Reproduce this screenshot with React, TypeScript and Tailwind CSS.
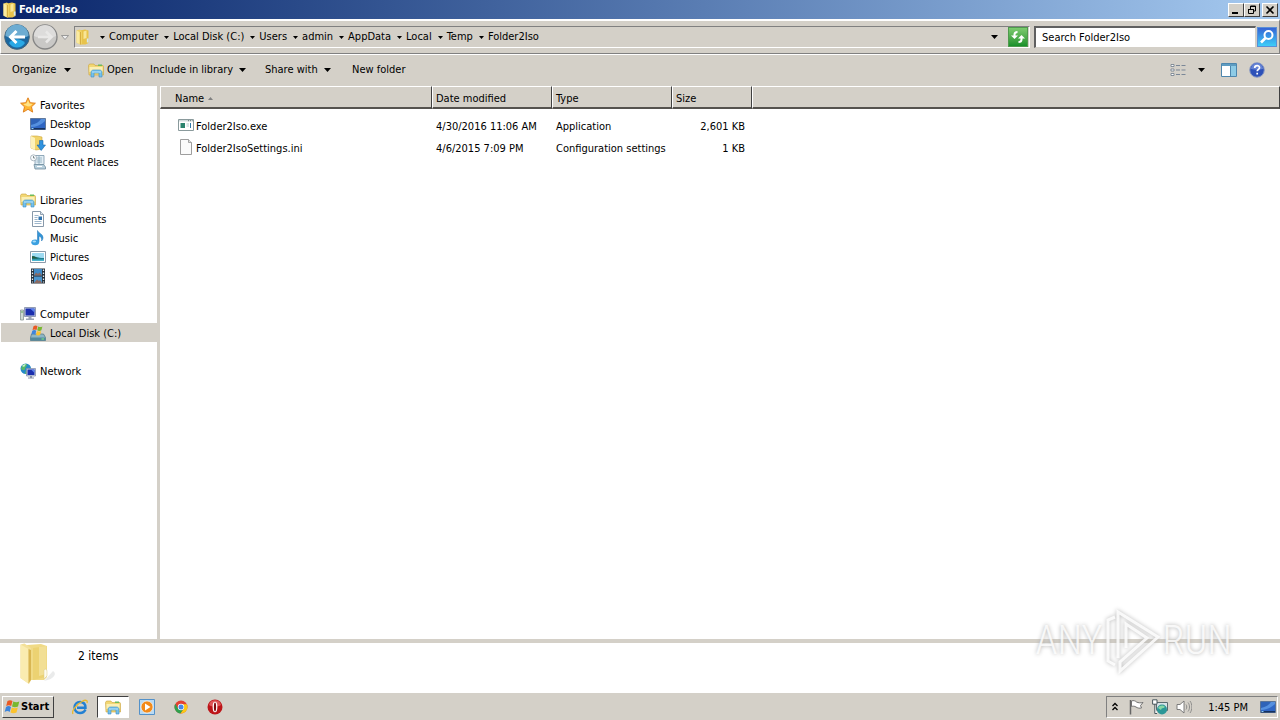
import type { ReactNode } from 'react';

type IconProps = { className?: string };

function Svg({ children, className = 'size-4', box = '0 0 16 16' }: { children: ReactNode; className?: string; box?: string }) {
  return (
    <svg viewBox={box} className={`shrink-0 ${className}`} fill="none" aria-hidden="true">
      {children}
    </svg>
  );
}

const Arrow = ({ className = 'h-1 w-[7px]' }: IconProps) => (
  <Svg box="0 0 7 4" className={className}>
    <path d="M0 0h7L3.5 4z" fill="#000" />
  </Svg>
);

const Folder = ({ className }: IconProps) => (
  <Svg className={className}>
    <path d="M5 1.500l5-1 3.500 1v12.500l-3 1.500H6z" fill="#e8c34b" />
    <path d="M8.500 2.500l3-1V9l-3 1z" fill="#f8e598" />
    <path d="M1.500 1.500L5 .5l2 2v12L5.500 15.800l-4-2z" fill="#f0d264" />
    <path d="M1.500 1.500l3 1.500v12l-3-1.500z" fill="#faeaa0" />
    <path d="M5.500 3v12.500" stroke="#cfa338" strokeWidth=".8" />
    <path d="M11.800 9.500h1.700v4h-1.700z" fill="#d6e8ef" />
  </Svg>
);

const BigFolder = () => (
  <Svg box="0 0 40 42" className="h-[42px] w-10">
    <path d="M26 37l8-9c4 2 2 8-9 10z" fill="#dcdddd" opacity=".6" />
    <path d="M8 2l14-1 6 2v31l-3 3H11z" fill="#f0da86" />
    <path d="M14 5l13-2v31l-13 3z" fill="#ecd272" />
    <path d="M20 4l7-1v28l-7 2z" fill="#f2df95" />
    <path d="M1.500 1.500l4-1L12 5v32l-2 4-8.500-6z" fill="#f3e09a" />
    <path d="M1.500 1.500l8 4.500v34.500l-8-5.500z" fill="#faecb0" />
    <path d="M9.500 6l2.500 1v30l-2.500 3.500z" fill="#d9b652" />
    <path d="M25 27c1-1.500 3-1 3 1v5l-3 3z" fill="#fdfbef" stroke="#d8c88a" strokeWidth=".5" />
  </Svg>
);

const Explorer = ({ className }: IconProps) => (
  <Svg className={className}>
    <path d="M.5 3.500L1.500 2H6l1 1.500h8l.5 1V13H1z" fill="#f2d774" stroke="#c9a13a" strokeWidth=".6" />
    <path d="M10 2.500h4V4h-4z" fill="#6dbb5a" />
    <path d="M1.500 5h13v5h-13z" fill="#fbefb4" />
    <path d="M3 15V10.500C3 9 4 8 5.500 8h6C13 8 14 9 14 10.500V15h-3v-4H6v4z" fill="#76c0ea" stroke="#3a8fc6" strokeWidth=".6" />
    <path d="M4 10h9" stroke="#c8ebfb" strokeWidth=".8" />
  </Svg>
);

const Star = () => (
  <Svg>
    <path d="M8 .8l2.200 4.900 5.200.5-3.900 3.600 1.200 5.300L8 12.300l-4.700 2.800 1.200-5.300L.6 6.200l5.200-.5z" fill="#ffb632" stroke="#de7a17" strokeWidth=".9" />
    <path d="M8 3l1.400 3.500 3.200.4-2.600 2.300L8 9.500 4.500 8 3.500 6.900l3-.4z" fill="#ffe388" />
  </Svg>
);

const Desktop = () => (
  <Svg>
    <path d="M.5 2.500h15v11H.5z" fill="#2f66c4" stroke="#52698c" strokeWidth=".8" />
    <path d="M1 11c5 0 10-2 14-6V3H1z" fill="#5590df" />
    <path d="M1 9c5-1 8-3 10-6H1z" fill="#2f63b8" />
    <path d="M1 12h14v1.500H1z" fill="#15315f" />
    <path d="M1.500 12h2v1h-2z" fill="#8ed0ff" />
  </Svg>
);

const Downloads = () => (
  <Svg>
    <path d="M1 1h6l5 1v12l-6 1-5-2z" fill="#f1d368" stroke="#cda63c" strokeWidth=".6" />
    <path d="M1 1l4 2v12l-4-2z" fill="#fdf2ba" />
    <path d="M9.500 5.500h3.500V10h2.500l-4.300 5.500L7 10h2.500z" fill="#2f92df" stroke="#1668ad" strokeWidth=".6" />
  </Svg>
);

const Recent = () => (
  <Svg>
    <path d="M5 1.500h9v9H5z" fill="#e3eef5" stroke="#7896a9" strokeWidth=".8" />
    <path d="M6.500 4H12M6.500 6H12M6.500 8H12M9 2v8" stroke="#8aa9bb" strokeWidth=".8" />
    <path d="M4 10.500h9.500l2 2.500v2H5z" fill="#b9d0dd" stroke="#6f8b9c" strokeWidth=".8" />
    <path d="M7 12.500h5" stroke="#fff" />
    <circle cx="3.500" cy="3.800" r="3" fill="#f8fbfd" stroke="#9aa7b1" strokeWidth=".8" />
    <path d="M3.500 2v2H5" stroke="#566" strokeWidth=".7" />
  </Svg>
);

const Doc = () => (
  <Svg>
    <path d="M2.500.5h8l3 3v12h-11z" fill="#fff" stroke="#7b8da0" strokeWidth=".9" />
    <path d="M10.500.5v3h3" fill="#dbe5ee" stroke="#7b8da0" strokeWidth=".8" />
    <path d="M4.500 4.500h4M4.500 6.500h3M4.500 8.500h3M4.500 10.500h7M4.500 12.500h7" stroke="#84a3bf" strokeWidth=".8" />
    <path d="M8.500 5.500h3.500v3.500H8.500z" fill="#2f73ae" />
  </Svg>
);

const Music = () => (
  <Svg>
    <path d="M7.500.5c1 3 5.500 3.500 5.500 7 0 1.500-.5 2.500-1.500 3.500.5-2.500-.5-4.500-2.500-5v6h-1.500z" fill="#3496d8" stroke="#1e72b4" strokeWidth=".5" />
    <ellipse cx="5.200" cy="12.300" rx="3.900" ry="2.900" fill="#3ba0e0" />
    <ellipse cx="4.300" cy="11.500" rx="1.800" ry="1" fill="#a7ddf8" />
  </Svg>
);

const Pictures = () => (
  <Svg>
    <path d="M.5 2.500h15v11H.5z" fill="#fff" stroke="#7f90a0" strokeWidth=".9" />
    <path d="M2 4h12v8H2z" fill="#9edaf1" />
    <path d="M2 7c3 0 5 2 12 2v3H2z" fill="#1f7f8f" />
    <path d="M2 7.500c2-1 4 1 6 2H2z" fill="#265c3e" />
    <path d="M2 10.500h12V12H2z" fill="#4bb6ce" />
  </Svg>
);

const Videos = () => (
  <Svg>
    <path d="M1 .5h14v15H1z" fill="#252f38" />
    <path d="M4 1h8v6.500H4z" fill="#3f8ac7" />
    <path d="M4 8.500h8V15H4z" fill="#4a96cf" />
    <path d="M4 7.500l2-3 2 1.500 1.500-1.500 2.500 3zM4 15l3-3.500L9 13l1-1 2 3z" fill="#8b6a62" />
    <path d="M2.500 1.500v13M13.500 1.500v13" stroke="#e6eef4" strokeWidth="1.300" strokeDasharray="1.500 1.500" />
  </Svg>
);

const ComputerIcon = () => (
  <Svg>
    <path d="M.5 4h3v10h-3z" fill="#cfd9d4" stroke="#7d8b88" strokeWidth=".7" />
    <path d="M1 6h2" stroke="#58a65b" />
    <path d="M4.500 1.500h11v9h-11z" fill="#cfd6e6" stroke="#7c88a3" strokeWidth=".8" />
    <path d="M5.500 2.500h9v7h-9z" fill="#1b2fae" />
    <path d="M10 2.500h4.500v4z" fill="#5c83ea" />
    <path d="M8.500 11h3v1.500H14V14H6v-1.500h2.500z" fill="#9ba4b5" />
  </Svg>
);

const Flag = ({ className }: IconProps) => (
  <Svg className={className}>
    <path d="M3.500 2c2-1.300 3.500-1 5 0L7.200 7c-1.500-1-3-1.200-5 0z" fill="#ea5a24" />
    <path d="M9.300 2.500c2 1 4 1 6 0L14 7.500c-2 1-4.200 1-6 0z" fill="#78b82f" />
    <path d="M2 7.900c2-1.300 3.500-1 5 0l-1.300 5c-1.500-1-3-1.200-5 0z" fill="#3d85dc" />
    <path d="M7.800 8.400c1.800 1 4 1 6 0l-1.300 5c-2 1-4.200 1-6 0z" fill="#fbc22d" />
  </Svg>
);

const Disk = () => (
  <Svg>
    <path d="M1.500 9h12l2 3.500v3H.5v-3z" fill="#8eb6c5" stroke="#53717e" strokeWidth=".7" />
    <path d="M.5 12.500h15v3H.5z" fill="#53899c" />
    <path d="M11.500 14h2.500" stroke="#7df07d" />
    <path d="M3.500 1.200c1.500-1 2.800-.8 4 0l-1 3.800c-1.300-.8-2.500-.8-4 0z" fill="#ea5a24" />
    <path d="M8.200 1.500c1.300.8 2.700.8 4.200 0l-1 3.800c-1.500.8-2.900.8-4.200 0z" fill="#78b82f" />
    <path d="M2.300 5.700c1.500-1 2.800-.8 4 0l-1 3.800c-1.300-.8-2.500-.8-4 0z" fill="#3d85dc" />
    <path d="M7 6c1.300.8 2.700.8 4.200 0l-1 3.800C8.700 10.600 7.300 10.600 6 9.800z" fill="#fbc22d" />
  </Svg>
);

const NetworkIcon = () => (
  <Svg>
    <circle cx="5.800" cy="5.800" r="5.300" fill="#2589c8" />
    <path d="M2 3c2-3 5-2 5-1S5 4 5 6 2 7 1 6zM6 7l3 1-1 3H5z" fill="#56b968" />
    <path d="M2 3c1-1.500 3-2 4-1.800L4 4z" fill="#c3efcf" />
    <path d="M6.500 5.500h9v7.500h-9z" fill="#cdd6e8" stroke="#7c88a3" strokeWidth=".7" />
    <path d="M7.500 6.500h7v5.500h-7z" fill="#1b2fae" />
    <path d="M11 6.500h3.500V10z" fill="#5c83ea" />
    <path d="M10 13h2v1.500h2v1H8v-1h2z" fill="#8993a8" />
  </Svg>
);

const ExeIcon = () => (
  <Svg>
    <path d="M.5 2.500h15v11H.5z" fill="#fff" stroke="#8a9a9c" />
    <path d="M1 3h14v1.500H1z" fill="#d0dbdc" />
    <path d="M10 3.700h1M12 3.700h1M14 3.700h.6" stroke="#64787a" />
    <path d="M2.500 6h4.500v5H2.500z" fill="#29836d" />
    <path d="M8.500 7h2.500M8.500 9h2.500" stroke="#9bb" strokeWidth=".8" />
    <path d="M12.500 6v5" stroke="#2f78a8" />
  </Svg>
);

const BlankFile = () => (
  <Svg>
    <path d="M2.500.5h8l3 3v12h-11z" fill="#fbfbfb" stroke="#939393" strokeWidth=".9" />
    <path d="M10.500.5v3h3" fill="#e3e3e3" stroke="#939393" strokeWidth=".8" />
  </Svg>
);

const crumbs = ['Computer', 'Local Disk (C:)', 'Users', 'admin', 'AppData', 'Local', 'Temp', 'Folder2Iso'];

const groups = [
  { label: 'Favorites', icon: <Star />, items: [
    { label: 'Desktop', icon: <Desktop /> },
    { label: 'Downloads', icon: <Downloads /> },
    { label: 'Recent Places', icon: <Recent /> },
  ] },
  { label: 'Libraries', icon: <Explorer />, items: [
    { label: 'Documents', icon: <Doc /> },
    { label: 'Music', icon: <Music /> },
    { label: 'Pictures', icon: <Pictures /> },
    { label: 'Videos', icon: <Videos /> },
  ] },
  { label: 'Computer', icon: <ComputerIcon />, items: [{ label: 'Local Disk (C:)', icon: <Disk />, selected: true }] },
  { label: 'Network', icon: <NetworkIcon />, items: [] },
];

const files = [
  { name: 'Folder2Iso.exe', icon: <ExeIcon />, date: '4/30/2016 11:06 AM', type: 'Application', size: '2,601 KB' },
  { name: 'Folder2IsoSettings.ini', icon: <BlankFile />, date: '4/6/2015 7:09 PM', type: 'Configuration settings', size: '1 KB' },
];

const raised = 'border border-t-white border-l-white border-r-[#404040] border-b-[#404040] bg-[#d4d0c8]';
const headCell = 'h-[23px] border-t border-l border-r border-b-2 border-t-white border-l-white border-r-[#404040] border-b-[#55524e] px-[3px] pt-1 text-left font-normal';

function TitleBar() {
  return (
    <header className="flex h-[19px] items-center bg-linear-to-r from-[#0a246a] to-[#a6caf0] px-[2px]">
      <Folder />
      <h1 className="ml-px flex-1 text-[11px] font-bold text-white">Folder2Iso</h1>
      <button aria-label="Minimize" className={`flex h-[14px] w-4 items-center justify-center ${raised}`}>
        <Svg box="0 0 10 10" className="size-[10px]"><path d="M1 7h6v2H1z" fill="#000" /></Svg>
      </button>
      <button aria-label="Restore" className={`flex h-[14px] w-4 items-center justify-center ${raised}`}>
        <Svg box="0 0 10 10" className="size-[10px]">
          <path d="M3.500 4V1h5v5H7M3 1.500h6M1.500 4.500h5v4h-5zM1 4.500h6" stroke="#000" />
        </Svg>
      </button>
      <button aria-label="Close" className={`ml-[2px] flex h-[14px] w-4 items-center justify-center ${raised}`}>
        <Svg box="0 0 10 10" className="size-[10px]"><path d="M1.500 1.500l7 7M8.500 1.500l-7 7" stroke="#000" strokeWidth="1.600" /></Svg>
      </button>
    </header>
  );
}

function AddressBar() {
  return (
    <div className="flex h-[35px] items-center border border-t-2 border-[#808080] border-t-white border-l-white pr-[2px] pl-[3px]">
      <button aria-label="Back">
        <Svg box="0 0 26 26" className="size-[26px]">
          <circle cx="13" cy="13" r="12.300" fill="#1c679f" stroke="#45667c" />
          <path d="M1.500 12a11.500 11.500 0 0 1 23 0c-6 3-17 3-23 0z" fill="#6dacd2" />
          <path d="M5 19c4-5 12-5 16 0-4 6-12 6-16 0z" fill="#29a9e6" />
          <path d="M12.500 7L6.500 13l6 6M7.500 13H21" stroke="#fff" strokeWidth="3" />
        </Svg>
      </button>
      <button aria-label="Forward" className="ml-[2px]">
        <Svg box="0 0 26 26" className="size-[26px]">
          <circle cx="13" cy="13" r="12" fill="#c9c8c6" stroke="#858585" strokeWidth="1.300" />
          <path d="M2 12a11 11 0 0 1 22 0c-6 3-16 3-22 0z" fill="#dddcdb" />
          <path d="M14 7.500l5.500 5.500-5.500 5.500M18.500 13H6" stroke="#e9e8e7" strokeWidth="2.500" />
        </Svg>
      </button>
      <button aria-label="Recent pages" className="ml-[3px]">
        <Svg box="0 0 8 5" className="h-[5px] w-2"><path d="M.5.5h7L4 4.500z" fill="#eee" stroke="#888" strokeWidth=".8" /></Svg>
      </button>
      <nav aria-label="Address" className="ml-[5px] flex h-[22px] flex-1 items-center border border-t-[#808080] border-r-white border-b-white border-l-[#808080]">
        <Folder />
        {crumbs.map((name) => (
          <span key={name} className="flex items-center pl-[6px] first-of-type:pl-[9px]">
            <Arrow className="mr-1 h-[3px] w-[5px]" />
            <a href="#" className="whitespace-nowrap">{name}</a>
          </span>
        ))}
        <button aria-label="Previous locations" className="mr-[10px] ml-auto flex h-full items-center"><Arrow /></button>
        <button aria-label="Refresh" className="mr-px flex size-5 items-center justify-center border border-[#4f9a4d] bg-linear-to-b from-[#7ccb6f] to-[#15912a]">
          <Svg>
            <path d="M4.500 7V5.500C4.500 4 5.500 3 7.500 3" stroke="#fff" strokeWidth="2" />
            <path d="M1 6.500h7L4.500 10z" fill="#fff" />
            <path d="M11.500 9v1.500c0 1.500-1 2.500-3 2.500" stroke="#fff" strokeWidth="2" />
            <path d="M8 9.500h7L11.500 6z" fill="#fff" />
          </Svg>
        </button>
      </nav>
      <input
        type="text"
        aria-label="Search"
        placeholder="Search Folder2Iso"
        className="ml-1 h-[22px] w-[222px] border border-t-2 border-l-2 border-[#d4d0c8] border-t-[#606060] border-l-[#606060] bg-white px-[6px] placeholder:text-black placeholder:opacity-100"
      />
      <button aria-label="Start search" className="ml-px flex size-5 items-center justify-center border border-[#5a8fd6] bg-linear-to-b from-[#3763d4] to-[#3ecdf8]">
        <Svg>
          <circle cx="9.500" cy="6" r="4" stroke="#fff" strokeWidth="2" />
          <path d="M6.500 9L2 13.500" stroke="#fff" strokeWidth="2.600" />
        </Svg>
      </button>
    </div>
  );
}

function Toolbar() {
  return (
    <div className="flex h-8 items-center border-t border-white pr-[15px] pb-[2px] pl-3">
      <button className="flex w-[76px] items-center gap-2">Organize <Arrow /></button>
      <button className="flex w-[62px] items-center gap-[3px]"><Explorer /> Open</button>
      <button className="flex w-[115px] items-center gap-[6px] whitespace-nowrap">Include in library <Arrow /></button>
      <button className="flex w-[87px] items-center gap-[6px] whitespace-nowrap">Share with <Arrow /></button>
      <button className="whitespace-nowrap">New folder</button>
      <button aria-label="Change view" className="ml-auto">
        <Svg>
          <path d="M1 2.500h3v2H1zM1 7h3v2H1zM1 11.500h3v2H1z" fill="#fff" stroke="#6c7888" strokeWidth=".8" />
          <path d="M6 3.500h4M6 8h4M6 12.500h4M11.500 3.500h4M11.500 8h4M11.500 12.500h4" stroke="#7a8797" />
        </Svg>
      </button>
      <button aria-label="More views" className="ml-3"><Arrow /></button>
      <button aria-label="Preview pane" className="ml-4">
        <Svg>
          <path d="M.5 1.500h15v13H.5z" fill="#fff" stroke="#4d86ad" />
          <path d="M1 2h14v2H1z" fill="#5e9cc1" />
          <path d="M10 4h5v10h-5z" fill="#8dcbe6" />
          <path d="M9.500 4v10" stroke="#4d86ad" />
        </Svg>
      </button>
      <button aria-label="Help" className="ml-3">
        <Svg>
          <circle cx="8" cy="8" r="7.300" fill="#2c50b8" stroke="#8d9cc4" />
          <path d="M2 7a6 6 0 0 1 12 0c-4 1-8 1-12 0z" fill="#6482d4" />
          <path d="M5.700 6c0-3 4.800-3 4.800-.3 0 1.600-2.300 1.700-2.300 3.500M8.200 10.800v1.800" stroke="#fff" strokeWidth="1.700" />
        </Svg>
      </button>
    </div>
  );
}

function Sidebar() {
  return (
    <nav aria-label="Folders" className="flex w-40 shrink-0 flex-col gap-[19px] border-r-[3px] border-[#d4d0c8] bg-white pt-[9px] pl-px">
      {groups.map((group) => (
        <section key={group.label}>
          <a href="#" className="flex h-[19px] items-center gap-1 pl-[19px]">
            {group.icon}
            <span className="pt-[2px]">{group.label}</span>
          </a>
          {group.items.map((item) => (
            <a key={item.label} href="#" className={`flex h-[19px] items-center gap-1 pl-[29px] ${'selected' in item ? 'bg-[#d4d0c8]' : ''}`}>
              {item.icon}
              <span className="pt-[2px]">{item.label}</span>
            </a>
          ))}
        </section>
      ))}
    </nav>
  );
}

function FileList() {
  return (
    <main className="min-w-0 flex-1 bg-white">
      <table className="w-full table-fixed border-separate border-spacing-0">
        <colgroup>
          <col className="w-[272px]" />
          <col className="w-[120px]" />
          <col className="w-[120px]" />
          <col className="w-20" />
          <col />
        </colgroup>
        <thead className="bg-[#d4d0c8]">
          <tr>
            <th className={headCell}>
              <span className="flex items-center gap-1 pl-[11px]">
                Name
                <Svg box="0 0 5 3" className="mb-[2px] h-[3px] w-[5px]"><path d="M0 3h5L2.500 0z" fill="#808080" /></Svg>
              </span>
            </th>
            <th className={headCell}>Date modified</th>
            <th className={headCell}>Type</th>
            <th className={headCell}>Size</th>
            <td className={headCell} />
          </tr>
        </thead>
        <tbody className="before:block before:h-[5px] before:content-['']">
          {files.map((file) => (
            <tr key={file.name} className="h-[22px] whitespace-nowrap">
              <td>
                <span className="flex items-center gap-[2px] pl-[18px]">
                  {file.icon}
                  <span className="pt-1">{file.name}</span>
                </span>
              </td>
              <td className="pt-1 pl-1">{file.date}</td>
              <td className="pt-1 pl-1">{file.type}</td>
              <td className="pt-1 pr-[7px] text-right">{file.size}</td>
              <td />
            </tr>
          ))}
        </tbody>
      </table>
    </main>
  );
}

function Taskbar() {
  return (
    <footer className="flex h-7 items-center border-t border-white bg-[#d4d0c8] px-[2px]">
      <button className={`flex h-[22px] w-[52px] items-center gap-px pl-px text-[11px] font-bold ${raised}`}>
        <Flag /> Start
      </button>
      <button aria-label="Internet Explorer" className="ml-[18px]">
        <Svg>
          <path d="M13.500 10.500c-1 2.300-3 3.500-5.500 3.500-3.300 0-5.500-2.300-5.500-5.500S4.700 3 8 3s5.500 2 5.500 5.800H5" stroke="#2280d3" strokeWidth="2.400" />
          <path d="M1 15C-1 12 5 5 10 2.500c3-1.700 6-2 5 1.500" stroke="#e9b92f" strokeWidth="1.300" />
        </Svg>
      </button>
      <button aria-label="Folder2Iso" className="ml-[9px] flex h-[22px] w-8 items-center justify-center border border-t-[#404040] border-r-white border-b-white border-l-[#404040] bg-white">
        <Explorer />
      </button>
      <button aria-label="Media Player" className="ml-[10px]">
        <Svg>
          <path d="M.5.5h15v15H.5z" fill="#b9daf3" stroke="#5391c9" />
          <circle cx="8" cy="8" r="6" fill="#f28a1a" stroke="#fff" strokeWidth=".6" />
          <path d="M6 4.500v7L11.500 8z" fill="#fff" />
        </Svg>
      </button>
      <button aria-label="Chrome" className="ml-[18px]">
        <Svg>
          <circle cx="8" cy="8" r="6.500" fill="#e34133" />
          <path d="M2.300 4.800A6.500 6.500 0 0 0 7.500 14.500L11 9.500 5 9.500z" fill="#2fa04e" />
          <path d="M7.500 14.500A6.500 6.500 0 0 0 13.800 5.200H8l3 4.300z" fill="#fbc916" />
          <circle cx="8" cy="8" r="3.200" fill="#fff" />
          <circle cx="8" cy="8" r="2.500" fill="#4587e8" />
        </Svg>
      </button>
      <button aria-label="Opera" className="ml-[18px]">
        <Svg>
          <circle cx="8" cy="8" r="7.500" fill="#bd1519" />
          <path d="M2 6a6.200 6.200 0 0 1 12 0c-3 2-9 2-12 0z" fill="#df5759" />
          <ellipse cx="8" cy="8" rx="2.400" ry="5.300" fill="#fff" />
          <ellipse cx="8" cy="8" rx="1.100" ry="4.400" fill="#7d0b0e" />
        </Svg>
      </button>
      <div className="ml-auto flex h-[22px] items-center border border-t-[#808080] border-r-white border-b-white border-l-[#808080] pr-px pl-[5px]">
        <button aria-label="Show hidden icons">
          <Svg box="0 0 6 9" className="h-[9px] w-[6px]"><path d="M.5 4L3 1.500 5.500 4M.5 8L3 5.500 5.500 8" stroke="#000" strokeWidth="1.300" /></Svg>
        </button>
        <button aria-label="Action Center" className="ml-[10px]">
          <Svg>
            <path d="M2.500 1v14.500" stroke="#666" strokeWidth="1.500" />
            <path d="M3.500 2c2-1 4 0 5 1 2 1 4 1 6.500.5l-2.500 3 1 2.500c-2 .5-4 0-5.500-1S5 7 3.500 7.500z" fill="#fff" stroke="#666" strokeWidth=".9" />
          </Svg>
        </button>
        <button aria-label="Network status" className="ml-2">
          <Svg>
            <path d="M4.500 3.500h11v8h-11z" fill="#d7e3e7" stroke="#5b6a70" />
            <circle cx="10" cy="10.500" r="5" fill="#2b9797" />
            <path d="M6 9c2-3 5-3 7-1-2 2-3 0-4 3z" fill="#88d6a5" />
            <path d="M.6.8h4.400v4.400H.6zM2.800 5v9.500H5" fill="#fff" stroke="#49575d" strokeWidth="1" />
          </Svg>
        </button>
        <button aria-label="Volume" className="ml-2">
          <Svg>
            <path d="M1 5.500h3L8 2v12l-4-3.500H1z" fill="#fff" stroke="#707070" strokeWidth=".9" />
            <path d="M10 5.500c1 1.500 1 3.500 0 5M12 3.500c2 2.500 2 6.500 0 9M14 2c2.500 3.500 2.500 8.500 0 12" stroke="#858585" strokeWidth=".9" />
          </Svg>
        </button>
        <time className="ml-4 pt-[2px] whitespace-nowrap">1:45 PM</time>
        <button aria-label="Show desktop" className="ml-3"><Desktop /></button>
      </div>
    </footer>
  );
}

function Watermark() {
  return (
    <div className="pointer-events-none absolute right-12 bottom-[46px] flex items-center font-['Roboto_Condensed',Roboto,sans-serif] text-[40px] leading-[66px] font-light text-white/80 [text-shadow:0_0_4px_#aaa]">
      <span>ANY</span>
      <Svg box="0 0 60 66" className="h-[66px] w-[60px] drop-shadow-[0_0_2px_#aaa]">
        <path d="M12 9l-7 3v41l7 4M15 50V4l40 25-38 34v-9l27-24-21-14v24" stroke="#fff" strokeOpacity=".85" strokeWidth="3" />
      </Svg>
      <span>RUN</span>
    </div>
  );
}

export default function App() {
  return (
    <div className="relative flex min-h-screen flex-col bg-[#d4d0c8] font-['DejaVu_Sans_Condensed','DejaVu_Sans',sans-serif] text-[11px] leading-4 text-black">
      <TitleBar />
      <AddressBar />
      <Toolbar />
      <div className="flex flex-1">
        <Sidebar />
        <FileList />
      </div>
      <section aria-label="Details" className="flex h-[53px] border-t-4 border-[#d4d0c8] bg-white pl-[19px]">
        <BigFolder />
        <p className="mt-[5px] ml-[19px] text-xs">2 items</p>
      </section>
      <Taskbar />
      <Watermark />
    </div>
  );
}
